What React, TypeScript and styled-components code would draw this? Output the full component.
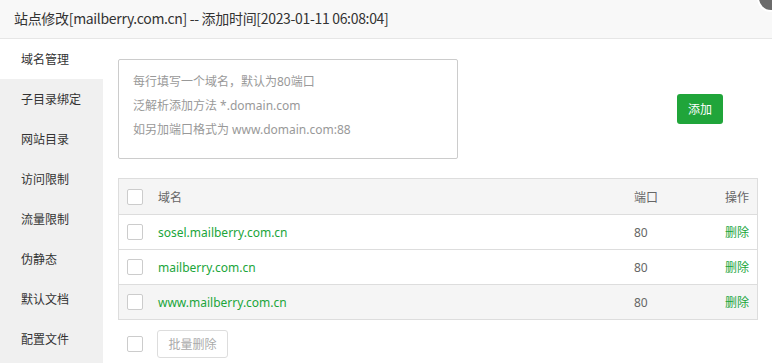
import React from "react";
import styled, { createGlobalStyle } from "styled-components";

const Global = createGlobalStyle`
  html, body { margin: 0; padding: 0; background: #fff; }
  body { font-family: "Noto Sans", "Noto Sans CJK SC", sans-serif; color: #333; }
  * { box-sizing: border-box; }
`;

const Layer = styled.div`
  width: 772px;
  height: 363px;
  position: relative;
  overflow: hidden;
  background: #fff;
  display: flex;
  flex-direction: column;
`;

const Header = styled.div`
  height: 39px;
  flex: none;
  background: #f8f8f8;
  border-bottom: 1px solid #e6e6e6;
  padding-left: 14px;
  display: flex;
  align-items: center;
  font-family: "Noto Sans CJK SC", sans-serif;
  font-size: 14px;
  letter-spacing: -0.32px;
  color: #333;
  padding-bottom: 2px;
`;

const Close = styled.div`
  position: absolute;
  right: -13px;
  top: -16px;
  width: 28px;
  height: 28px;
  border-radius: 50%;
  background: #6b6b6b;
  border: 2px solid #fff;
`;

const Body = styled.div`
  flex: 1;
  display: flex;
  min-height: 0;
`;

const Side = styled.div`
  width: 103px;
  flex: none;
  background: #f0f0f0;
  display: flex;
  flex-direction: column;
`;

const SideItem = styled.div<{ $active?: boolean }>`
  height: 40px;
  flex: none;
  display: flex;
  align-items: center;
  padding-left: 21px;
  font-size: 12px;
  color: #333;
  background: ${(p) => (p.$active ? "#fff" : "transparent")};
`;

const Main = styled.div`
  flex: 1;
  padding: 20px 15px 0 15px;
  display: flex;
  flex-direction: column;
`;

const TopRow = styled.div`
  display: flex;
  align-items: center;
`;

const Hint = styled.div`
  width: 340px;
  height: 100px;
  border: 1px solid #ccc;
  border-radius: 2px;
  padding: 10px 14px;
  font-size: 12px;
  line-height: 24px;
  color: #999;
`;

const AddBtn = styled.button`
  margin-left: 219px;
  width: 46px;
  height: 30px;
  background: #20a53a;
  border: none;
  border-radius: 3px;
  color: #fff;
  font-size: 12px;
  font-family: inherit;
  padding: 0;
`;

const Table = styled.div`
  margin-top: 19px;
  width: 640px;
  border: 1px solid #ddd;
  display: flex;
  flex-direction: column;
`;

const Row = styled.div<{ $bg?: boolean }>`
  height: 35px;
  display: grid;
  grid-template-columns: 31px 476px 62px 1fr;
  align-items: center;
  padding-left: 8px;
  padding-right: 8px;
  font-size: 12px;
  background: ${(p) => (p.$bg ? "#f5f5f5" : "#fff")};
  color: #666;
  & + & {
    border-top: 1px solid #ddd;
  }
`;

const Check = styled.span`
  width: 16px;
  height: 16px;
  border: 1px solid #ccc;
  border-radius: 2px;
  background: #fff;
  display: inline-block;
`;

const Domain = styled.span`
  color: #20a53a;
  font-size: 12px;
`;

const Op = styled.span<{ $green?: boolean }>`
  text-align: right;
  color: ${(p) => (p.$green ? "#20a53a" : "#666")};
`;

const Footer = styled.div`
  display: flex;
  align-items: center;
  padding-left: 9px;
  margin-top: 10px;
  gap: 14px;
`;

const BatchBtn = styled.button`
  height: 28px;
  width: 71px;
  border: 1px solid #ddd;
  border-radius: 3px;
  background: #fff;
  color: #aaa;
  font-size: 12px;
  font-family: inherit;
  padding: 0;
`;

const sideItems = ["域名管理", "子目录绑定", "网站目录", "访问限制", "流量限制", "伪静态", "默认文档", "配置文件"];
const domains = ["sosel.mailberry.com.cn", "mailberry.com.cn", "www.mailberry.com.cn"];

export default function App() {
  return (
    <Layer>
      <Global />
      <Header>站点修改[mailberry.com.cn] -- 添加时间[2023-01-11 06:08:04]</Header>
      <Close />
      <Body>
        <Side>
          {sideItems.map((s, i) => (
            <SideItem key={s} $active={i === 0}>{s}</SideItem>
          ))}
        </Side>
        <Main>
          <TopRow>
            <Hint>
              <div>每行填写一个域名，默认为80端口</div>
              <div>泛解析添加方法 *.domain.com</div>
              <div>如另加端口格式为 www.domain.com:88</div>
            </Hint>
            <AddBtn>添加</AddBtn>
          </TopRow>
          <Table>
            <Row $bg>
              <Check />
              <span>域名</span>
              <span>端口</span>
              <Op>操作</Op>
            </Row>
            {domains.map((d, i) => (
              <Row key={d} $bg={i === 2}>
                <Check />
                <Domain>{d}</Domain>
                <span>80</span>
                <Op $green>删除</Op>
              </Row>
            ))}
          </Table>
          <Footer>
            <Check />
            <BatchBtn>批量删除</BatchBtn>
          </Footer>
        </Main>
      </Body>
    </Layer>
  );
}
